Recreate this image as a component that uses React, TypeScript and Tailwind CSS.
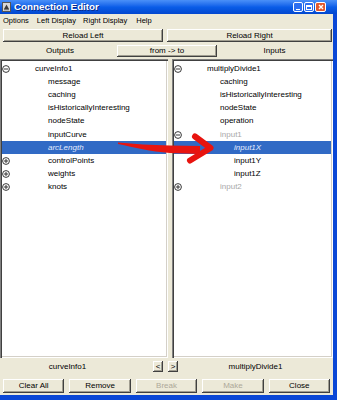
import React from "react";

type Row = {
  lvl: 0 | 1 | 2;
  text: string;
  icon?: "minus" | "plus";
  sel?: boolean;
  dim?: boolean;
};

const leftRows: Row[] = [
  { lvl: 0, text: "curveInfo1", icon: "minus" },
  { lvl: 1, text: "message" },
  { lvl: 1, text: "caching" },
  { lvl: 1, text: "isHistoricallyInteresting" },
  { lvl: 1, text: "nodeState" },
  { lvl: 1, text: "inputCurve" },
  { lvl: 1, text: "arcLength", sel: true },
  { lvl: 1, text: "controlPoints", icon: "plus" },
  { lvl: 1, text: "weights", icon: "plus" },
  { lvl: 1, text: "knots", icon: "plus" },
];

const rightRows: Row[] = [
  { lvl: 0, text: "multiplyDivide1", icon: "minus" },
  { lvl: 1, text: "caching" },
  { lvl: 1, text: "isHistoricallyInteresting" },
  { lvl: 1, text: "nodeState" },
  { lvl: 1, text: "operation" },
  { lvl: 1, text: "input1", icon: "minus", dim: true },
  { lvl: 2, text: "input1X", sel: true },
  { lvl: 2, text: "input1Y" },
  { lvl: 2, text: "input1Z" },
  { lvl: 1, text: "input2", icon: "plus", dim: true },
];

const indent = ["ml-[25px]", "ml-[38px]", "ml-[52px]"];

function Expander({ kind }: { kind: "minus" | "plus" }) {
  return (
    <svg width="8" height="8" viewBox="0 0 8 8">
      <circle cx="4" cy="4" r="3.4" fill="none" stroke="#222" strokeWidth="0.9" />
      <line x1="2" y1="4" x2="6" y2="4" stroke="#222" strokeWidth="0.9" />
      {kind === "plus" && <line x1="4" y1="2" x2="4" y2="6" stroke="#222" strokeWidth="0.9" />}
    </svg>
  );
}

function Tree({ rows }: { rows: Row[] }) {
  return (
    <div className="flex flex-col pt-[1px]">
      {rows.map((r, i) => (
        <div
          key={i}
          className={
            "h-[13.2px] flex items-center " + (r.sel ? "bg-[#316ac5]" : "")
          }
        >
          <div className="w-[8px] h-[8px] flex items-center justify-center">
            {r.icon && <Expander kind={r.icon} />}
          </div>
          <span
            className={
              indent[r.lvl] +
              " leading-none whitespace-nowrap " +
              (r.sel
                ? "italic text-[#e4ecff]"
                : r.dim
                ? "text-[#a8a8a8]"
                : "text-black")
            }
          >
            {r.text}
          </span>
        </div>
      ))}
    </div>
  );
}

const bevel =
  "bg-[#ece9d8] shadow-[inset_-1px_-1px_#404040,inset_1px_1px_#ffffff,inset_-2px_-2px_#a09d90] flex items-center justify-center leading-none";

const sunken =
  "bg-white shadow-[inset_1px_1px_#808080,inset_2px_2px_#404040,inset_-1px_-1px_#ffffff,inset_-2px_-2px_#d4d0c8] p-[2px] overflow-hidden";

export default function App() {
  return (
    <div className="relative w-[337px] h-[400px] flex flex-col bg-[#ece9d8] font-['Liberation_Sans',Arial,sans-serif] text-[8px] text-black overflow-hidden">
      {/* Title bar */}
      <div className="h-[14px] flex items-center bg-linear-to-b from-[#4a90f8] via-[#0a5de8] to-[#0347cf]">
        <div className="ml-[2px] w-[9px] h-[10px] flex items-center justify-center">
          <svg width="9" height="10" viewBox="0 0 9 10">
            <rect x="0.5" y="0.5" width="8" height="9" fill="#d8d8d8" stroke="#555" strokeWidth="1" />
            <path d="M2 7 L4.5 2.5 L7 7 Z" fill="#3a3a3a" />
            <rect x="2" y="7" width="5" height="1.2" fill="#777" />
          </svg>
        </div>
        <span className="ml-[3px] text-white font-bold text-[9.8px] leading-none [text-shadow:1px_1px_#0a2a8a]">
          Connection Editor
        </span>
        <div className="flex-1" />
        <div className="flex gap-[1px] mr-[11px]">
          <div className="w-[10px] h-[10px] rounded-[2px] bg-[#2c6ff0] border border-white flex items-end justify-center pb-[1px]">
            <div className="w-[4px] h-[1.5px] bg-white" />
          </div>
          <div className="w-[10px] h-[10px] rounded-[2px] bg-[#2c6ff0] border border-white flex items-center justify-center">
            <div className="w-[6px] h-[5px] border border-white border-t-2" />
          </div>
          <div className="w-[11px] h-[10px] rounded-[2px] bg-[#e2582e] border border-white flex items-center justify-center">
            <svg width="6" height="6" viewBox="0 0 6 6">
              <path d="M1 1 L5 5 M5 1 L1 5" stroke="#fff" strokeWidth="1.4" />
            </svg>
          </div>
        </div>
      </div>

      {/* Body */}
      <div className="flex-1 flex flex-col border-r-[4px] border-b-[5px] border-[#0a47d6]">
        {/* Menu */}
        <div className="h-[13px] flex items-center pl-[3px] text-[7.5px] leading-none">
          <span>Options</span>
          <span className="ml-[8px]">Left Display</span>
          <span className="ml-[7px]">Right Display</span>
          <span className="ml-[9px]">Help</span>
        </div>

        {/* Reload buttons */}
        <div className="mt-[2px] h-[13px] flex pl-[3px] pr-[1px] gap-[4px]">
          <div className={bevel + " w-[160px]"}>Reload Left</div>
          <div className={bevel + " flex-1"}>Reload Right</div>
        </div>

        {/* Outputs / from->to / Inputs */}
        <div className="mt-[3px] h-[12px] flex pl-[3px] pr-[1px]">
          <div className="w-[114px] flex items-center justify-center leading-none">Outputs</div>
          <div className={bevel + " w-[100px]"}>from -&gt; to</div>
          <div className="flex-1 flex items-center justify-center leading-none">Inputs</div>
        </div>

        {/* Panels */}
        <div className="mt-[2px] h-[299px] flex gap-[4px]">
          <div className={sunken + " w-[168px]"}>
            <Tree rows={leftRows} />
          </div>
          <div className={sunken + " flex-1"}>
            <Tree rows={rightRows} />
          </div>
        </div>

        {/* Node names + arrows */}
        <div className="mt-[3px] h-[11px] flex items-center">
          <div className="w-[135px] text-center leading-none">curveInfo1</div>
          <div className={bevel + " ml-[18px] w-[10px] h-[11px]"}>&lt;</div>
          <div className={bevel + " ml-[5px] w-[10px] h-[11px]"}>&gt;</div>
          <div className="flex-1 text-center leading-none">multiplyDivide1</div>
        </div>

        {/* Action buttons */}
        <div className="mt-[7px] h-[14px] flex pl-[3px] pr-[3px] gap-[5px]">
          <div className={bevel + " flex-1"}>Clear All</div>
          <div className={bevel + " flex-1"}>Remove</div>
          <div className={bevel + " flex-1 text-[#aca899]"}>Break</div>
          <div className={bevel + " flex-1 text-[#aca899]"}>Make</div>
          <div className={bevel + " flex-1"}>Close</div>
        </div>
      </div>

      {/* Red hand-drawn arrow overlay */}
      <svg
        className="absolute inset-0 pointer-events-none"
        width="337"
        height="400"
        viewBox="0 0 337 400"
      >
        <path
          d="M118 142.5 C 135 144, 150 145, 170 145.5 L 200 146 L 200 154 L 170 153 C 150 151.5, 135 147.5, 118 144 Z"
          fill="#e8140f"
        />
        <path
          d="M195 136.5 L210.5 148 L190 160.5"
          fill="none"
          stroke="#e8140f"
          strokeWidth="6"
          strokeLinecap="round"
          strokeLinejoin="round"
        />
      </svg>
    </div>
  );
}
